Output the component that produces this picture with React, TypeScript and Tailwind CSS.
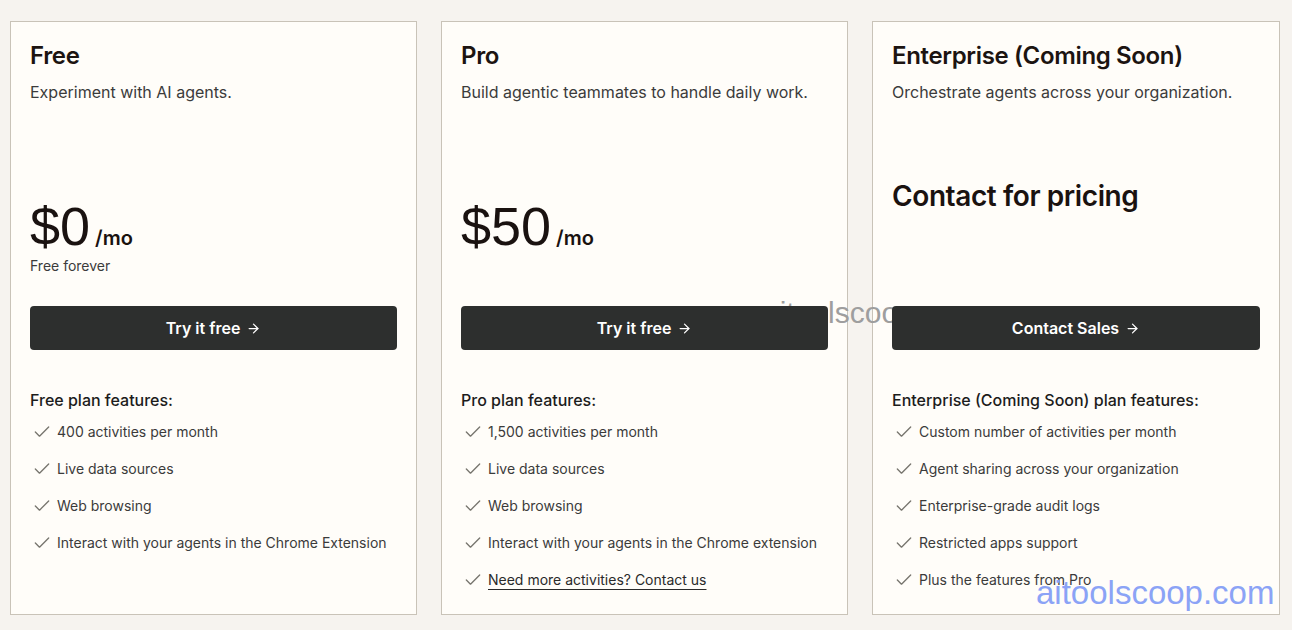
import { ArrowRight, Check } from "lucide-react";

interface Plan {
  name: string;
  blurb: string;
  price?: string;
  note?: string;
  cta: string;
  features: string[];
  link?: string;
}

const plans: Plan[] = [
  {
    name: "Free",
    blurb: "Experiment with AI agents.",
    price: "$0",
    note: "Free forever",
    cta: "Try it free",
    features: [
      "400 activities per month",
      "Live data sources",
      "Web browsing",
      "Interact with your agents in the Chrome Extension",
    ],
  },
  {
    name: "Pro",
    blurb: "Build agentic teammates to handle daily work.",
    price: "$50",
    cta: "Try it free",
    features: [
      "1,500 activities per month",
      "Live data sources",
      "Web browsing",
      "Interact with your agents in the Chrome extension",
    ],
    link: "Need more activities? Contact us",
  },
  {
    name: "Enterprise (Coming Soon)",
    blurb: "Orchestrate agents across your organization.",
    cta: "Contact Sales",
    features: [
      "Custom number of activities per month",
      "Agent sharing across your organization",
      "Enterprise-grade audit logs",
      "Restricted apps support",
      "Plus the features from Pro",
    ],
  },
];

function PlanCard({ plan }: { plan: Plan }) {
  return (
    <div className="flex flex-col border border-[#c9c3b8] bg-[#fffdf9] px-[19px] pt-[18px]">
      <h2 className="text-[24px] leading-[32px] font-semibold text-[#1c1411] tracking-[-0.35px]">{plan.name}</h2>
      <p className="mt-[8px] text-[16px] leading-[24px] text-[#3b3b3b]">{plan.blurb}</p>

      <div className="h-[202px]">
        {plan.price ? (
          <div className="pt-[96px]">
            <div className="flex items-baseline">
              <span className="font-['Liberation_Sans',sans-serif] text-[54px] leading-[52px] text-[#1a1210]">
                {plan.price}
              </span>
              <span className="ml-[5px] text-[20px] font-semibold text-[#1a1210]">/mo</span>
            </div>
            {plan.note && <p className="mt-[3px] text-[14px] leading-[20px] text-[#3b3b3b]">{plan.note}</p>}
          </div>
        ) : (
          <div className="pt-[74px]">
            <p className="text-[28px] leading-[36px] font-semibold text-[#1a1210] tracking-[-0.4px]">Contact for pricing</p>
          </div>
        )}
      </div>

      <button className="relative z-10 flex h-[44px] w-full items-center justify-center gap-[6px] rounded-[4px] bg-[#2d2f2e] text-[16px] font-semibold text-white">
        {plan.cta}
        <ArrowRight size={15} strokeWidth={2} />
      </button>

      <h3 className="mt-[38px] text-[16px] leading-[24px] font-medium text-[#1c1c1c]">{plan.name} plan features:</h3>
      <ul className="mt-[10px] flex flex-col gap-[17px]">
        {plan.features.map((f) => (
          <li key={f} className="flex items-center gap-[5px] text-[14px] leading-[20px] text-[#3b3b3b]">
            <Check size={20} strokeWidth={1.6} className="ml-[2px] shrink-0 text-[#77756e]" />
            {f}
          </li>
        ))}
        {plan.link && (
          <li className="flex items-center gap-[5px] text-[14px] leading-[20px] text-[#2a2a2a]">
            <Check size={20} strokeWidth={1.6} className="ml-[2px] shrink-0 text-[#77756e]" />
            <a className="underline underline-offset-[4px] decoration-[#2a2a2a]">{plan.link}</a>
          </li>
        )}
      </ul>
    </div>
  );
}

export default function App() {
  return (
    <div className="relative h-[630px] w-[1292px] overflow-hidden bg-[#f6f3ef] font-['Inter',sans-serif]">
      <div className="grid h-[615px] grid-cols-[407px_407px_408px] gap-6 pt-[21px] pl-[10px]">
        {plans.map((p) => (
          <PlanCard key={p.name} plan={p} />
        ))}
      </div>

      {/* watermarks */}
      <span className="absolute left-[763px] top-[298px] z-0 font-['Liberation_Sans',sans-serif] text-[30px] leading-[30px] text-[#9e9e9e]">
        aitoolscoop
      </span>
      <span className="absolute left-[1036px] top-[576px] z-20 font-['Liberation_Sans',sans-serif] text-[33px] leading-[33px] text-[#8ba3f6]">
        aitoolscoop.com
      </span>
    </div>
  );
}
